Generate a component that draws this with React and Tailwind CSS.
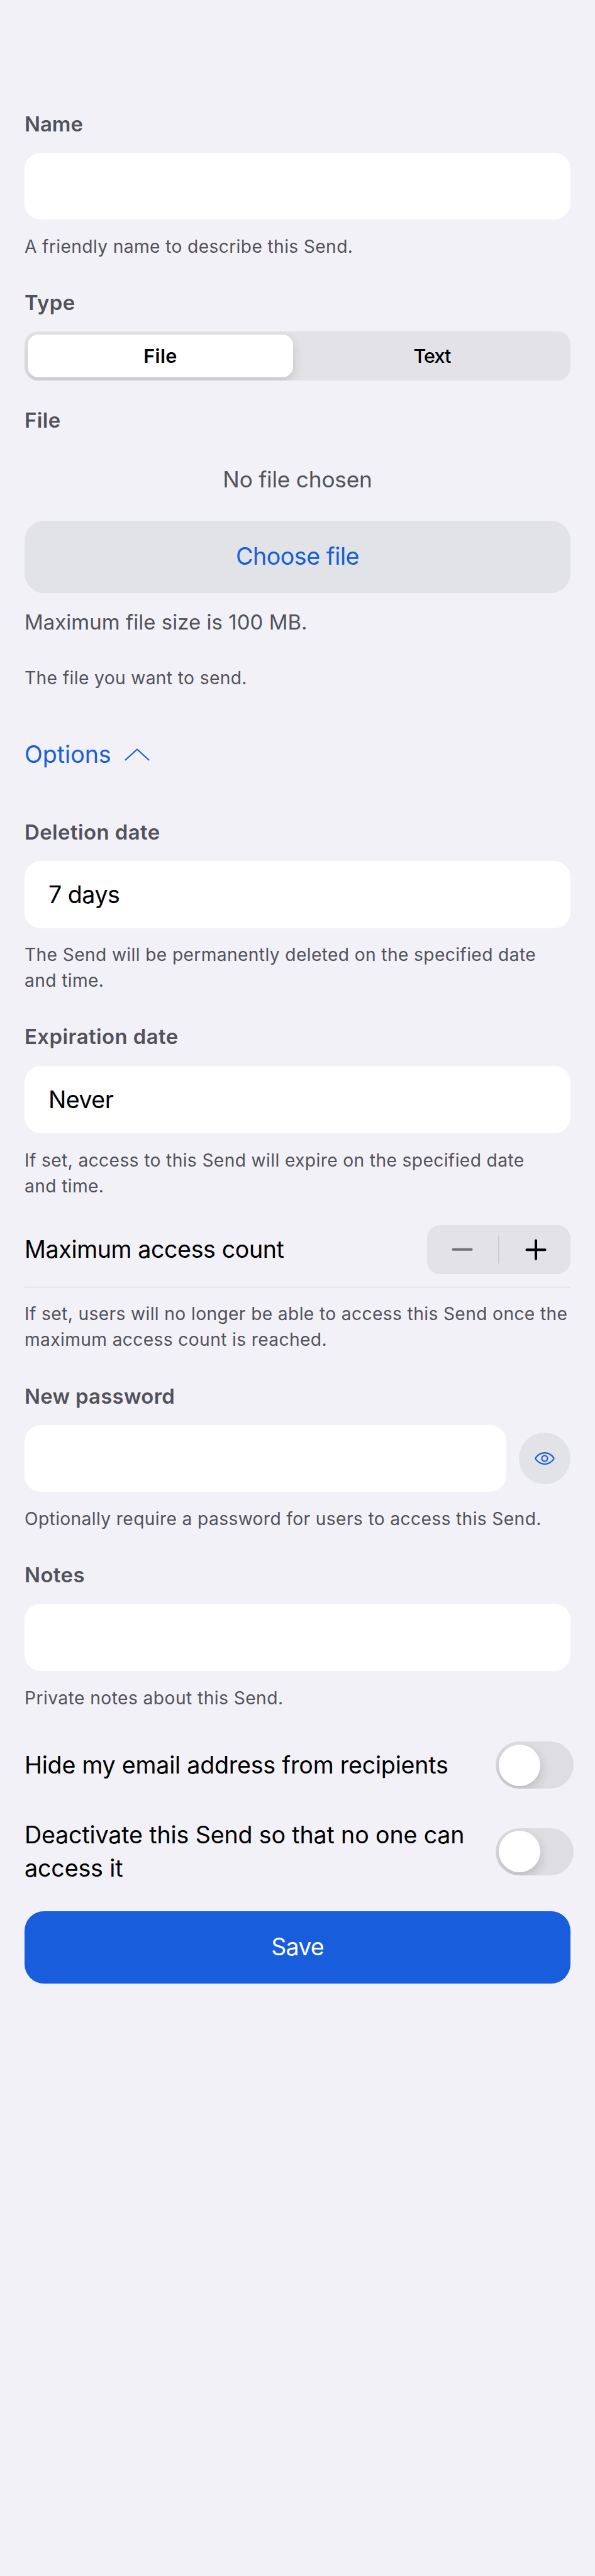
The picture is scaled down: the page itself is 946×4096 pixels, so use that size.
function Label({ className = '', children }) {
  return (
    <div className={`text-[32.9px] leading-10 font-semibold tracking-[0.013em] text-[#52525a] ${className}`}>
      {children}
    </div>
  );
}

function Help({ className = '', children }) {
  return (
    <p className={`text-[28.2px] leading-[41px] tracking-[0.013em] whitespace-nowrap text-[#52525a] ${className}`}>
      {children}
    </p>
  );
}

function Field({ className = '', children }) {
  return (
    <div className={`flex items-center rounded-[26px] bg-white px-[38px] text-[37.6px] leading-[52px] tracking-[-0.0133em] text-black ${className}`}>
      {children}
    </div>
  );
}

function Toggle() {
  return (
    <div className="flex h-[75px] w-[124px] shrink-0 items-center overflow-hidden rounded-full bg-[#dedde2] pl-[5px]">
      <div className="size-[66px] rounded-full bg-white shadow-[0_7px_18px_rgba(0,0,0,0.17)]" />
    </div>
  );
}

export default function App() {
  return (
    <main className="flex h-[4096px] w-[946px] flex-col bg-[#f2f1f7] px-[39px] pt-[177px] font-[Inter,sans-serif]">
      <Label className="tracking-normal">Name</Label>
      <Field className="mt-[26px] h-[106px]" />
      <Help className="mt-[23px]">A friendly name to describe this Send.</Help>

      <Label className="mt-12">Type</Label>
      <div className="mt-[26px] flex h-[78px] overflow-hidden rounded-[21px] bg-[#e3e2e7] p-[5px] text-[30.5px] leading-10 text-black">
        <div className="flex w-[422px] items-center justify-center rounded-[17px] bg-white font-semibold tracking-[0.012em] shadow-[0_7px_18px_rgba(0,0,0,0.14)]">
          File
        </div>
        <div className="flex flex-1 items-center justify-center pl-1.5 font-medium tracking-[-0.03em]">Text</div>
      </div>

      <Label className="mt-[43px]">File</Label>
      <div className="mt-[51px] text-center text-[35.2px] leading-[46px] tracking-[-0.005em] text-[#52525a]">No file chosen</div>
      <button className="mt-[43px] h-[115px] rounded-[31px] bg-[#e1e3e7] text-[37.6px] tracking-[-0.012em] text-[#175ddc]">
        Choose file
      </button>
      <div className="mt-[26px] text-[32.9px] leading-10 tracking-[0.002em] text-[#52525a]">Maximum file size is 100 MB.</div>
      <Help className="mt-[49px]">The file you want to send.</Help>

      <div className="mt-[75px] flex items-center text-[37.6px] leading-[52px] text-[#175ddc]">
        Options
        <svg className="ml-[21px] h-5 w-10" viewBox="0 0 40 20" fill="none" stroke="currentColor" strokeWidth="2.2" strokeLinecap="round" strokeLinejoin="round">
          <path d="M1.5 18.3 20 1.5l18.5 16.8" />
        </svg>
      </div>

      <Label className="mt-[77px]">Deletion date</Label>
      <Field className="mt-[26px] h-[107px]">7 days</Field>
      <Help className="mt-[22px]">
        The Send will be permanently deleted on the specified date
        <br />
        and time.
      </Help>

      <Label className="mt-12">Expiration date</Label>
      <Field className="mt-[27px] h-[107px]">Never</Field>
      <Help className="mt-[23px]">
        If set, access to this Send will expire on the specified date
        <br />
        and time.
      </Help>

      <div className="mt-[41px] flex items-center justify-between border-b border-[#c4c4c9] pb-5">
        <span className="text-[37.6px] leading-[52px] tracking-[-0.0102em] text-black">Maximum access count</span>
        <div className="flex h-[78px] w-[228px] items-center rounded-[21px] bg-[#e3e2e7]">
          <button className="flex flex-1 justify-center pr-0.5 text-[#727275]">
            <svg className="size-[34px]" viewBox="0 0 34 34" stroke="currentColor" strokeWidth="4" strokeLinecap="round">
              <path d="M2.4 16.8h29.2" />
            </svg>
          </button>
          <div className="h-11 w-[2px] rounded-full bg-[#cdcdd1]" />
          <button className="flex flex-1 justify-center pl-0.5 text-black">
            <svg className="size-[34px]" viewBox="0 0 34 34" stroke="currentColor" strokeWidth="4" strokeLinecap="round">
              <path d="M2.4 17.2h29.2M17 2.6v29.2" />
            </svg>
          </button>
        </div>
      </div>
      <Help className="mt-[22px]">
        If set, users will no longer be able to access this Send once the
        <br />
        maximum access count is reached.
      </Help>

      <Label className="mt-[49px] tracking-[0.0087em]">New password</Label>
      <div className="mt-[26px] flex items-center gap-5">
        <Field className="h-[106px] flex-1" />
        <button className="flex size-[82px] items-center justify-center rounded-full bg-[#e1e3e7] text-[#175ddc]">
          <svg className="h-5 w-8" viewBox="0 0 38 24" fill="none" stroke="currentColor" strokeWidth="2.5" strokeLinejoin="round">
            <path d="M1.9 10.6C6 5 12 1.3 19 1.3S32 5 36.1 10.6q.9 1.4 0 2.8C32 19 26 22.7 19 22.7S6 19 1.9 13.4q-.9-1.4 0-2.8Z" />
            <circle cx="19" cy="12" r="5.5" />
          </svg>
        </button>
      </div>
      <Help className="mt-[23px]">Optionally require a password for users to access this Send.</Help>

      <Label className="mt-12">Notes</Label>
      <Field className="mt-[26px] h-[107px]" />
      <Help className="mt-[23px] tracking-[0.0155em]">Private notes about this Send.</Help>

      <div className="mt-12 -mr-[5px] flex items-center justify-between text-[37.6px] leading-[53px] tracking-[-0.0057em] text-black">
        <span>Hide my email address from recipients</span>
        <Toggle />
      </div>
      <div className="mt-[47px] -mr-[5px] flex items-center justify-between text-[37.6px] leading-[53px] tracking-[-0.0036em] whitespace-nowrap text-black">
        <span>
          Deactivate this Send so that no one can
          <br />
          access it
        </span>
        <Toggle />
      </div>

      <button className="mt-[42px] h-[115px] rounded-[31px] bg-[#175ddc] text-[37.6px] tracking-[-0.023em] text-white">Save</button>
    </main>
  );
}
